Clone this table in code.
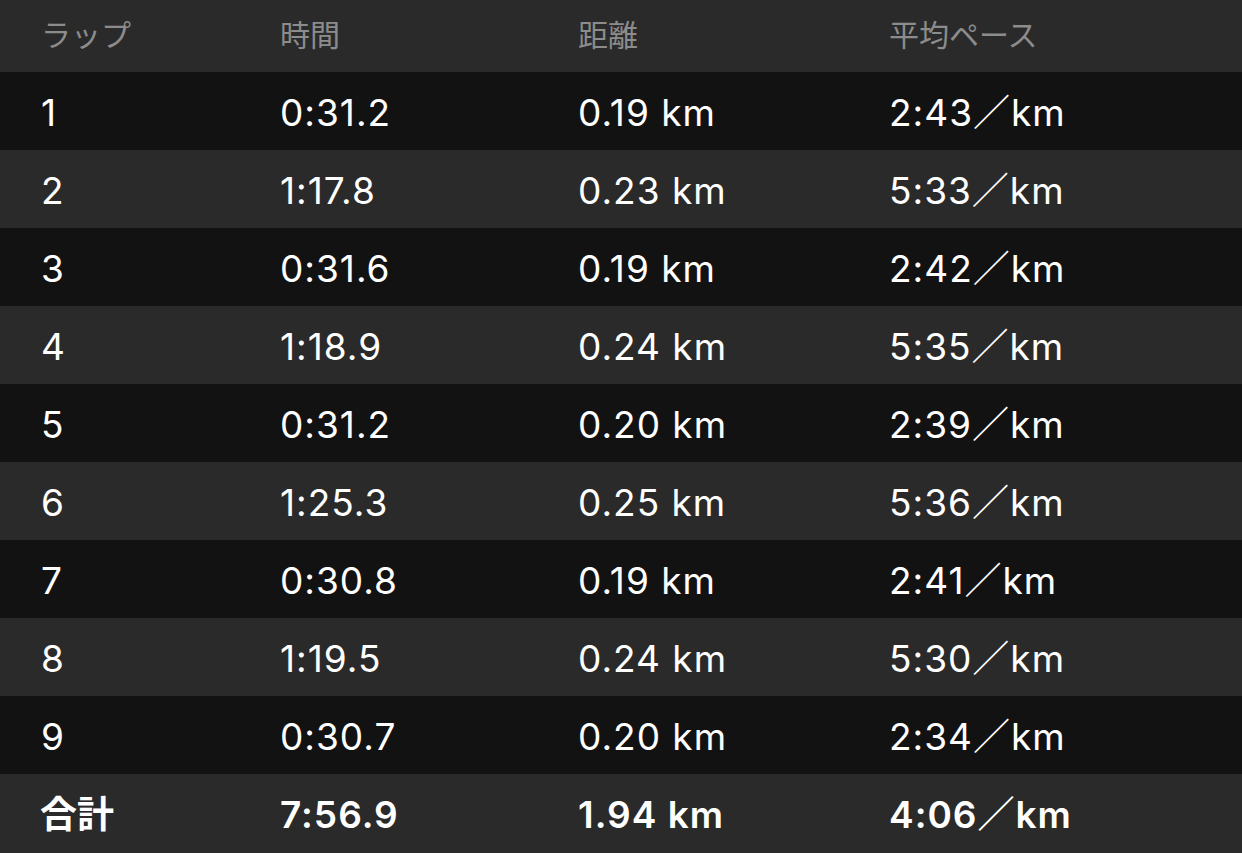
const laps = [
  { lap: '1', time: '0:31.2', dist: '0.19 km', pace: '2:43／km' },
  { lap: '2', time: '1:17.8', dist: '0.23 km', pace: '5:33／km' },
  { lap: '3', time: '0:31.6', dist: '0.19 km', pace: '2:42／km' },
  { lap: '4', time: '1:18.9', dist: '0.24 km', pace: '5:35／km' },
  { lap: '5', time: '0:31.2', dist: '0.20 km', pace: '2:39／km' },
  { lap: '6', time: '1:25.3', dist: '0.25 km', pace: '5:36／km' },
  { lap: '7', time: '0:30.8', dist: '0.19 km', pace: '2:41／km' },
  { lap: '8', time: '1:19.5', dist: '0.24 km', pace: '5:30／km' },
  { lap: '9', time: '0:30.7', dist: '0.20 km', pace: '2:34／km' },
]

const cols = 'grid grid-cols-[239px_298px_311px_1fr] pl-[41px] items-center'

export default function App() {
  return (
    <div
      className="w-[1242px] h-[853px] bg-[#121212] text-white overflow-hidden"
      style={{ fontFamily: 'Inter, "Noto Sans CJK JP", sans-serif' }}
    >
      <div className={`${cols} h-[72px] pb-[2px] bg-[#2a2a2a] text-[30px] text-[#8c8c8c]`}>
        <div>ラップ</div>
        <div>時間</div>
        <div>距離</div>
        <div>平均ペース</div>
      </div>

      {laps.map((r, i) => (
        <div
          key={r.lap}
          className={`${cols} h-[78px] pt-[3px] text-[37px] tracking-[1px] ${i % 2 === 0 ? 'bg-[#121212]' : 'bg-[#2a2a2a]'}`}
        >
          <div>{r.lap}</div>
          <div>{r.time}</div>
          <div>{r.dist}</div>
          <div>{r.pace}</div>
        </div>
      ))}

      <div className={`${cols} h-[79px] pt-[3px] bg-[#2a2a2a] text-[37px] tracking-[1px] font-semibold`}>
        <div className="tracking-normal -ml-[1px]">合計</div>
        <div>7:56.9</div>
        <div>1.94 km</div>
        <div>4:06／km</div>
      </div>
    </div>
  )
}
